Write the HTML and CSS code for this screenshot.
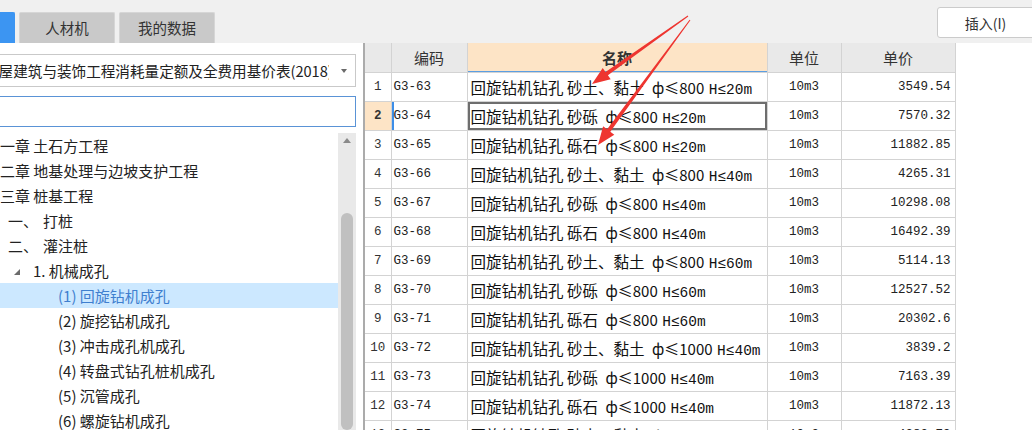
FILE: index.html
```html
<!DOCTYPE html>
<html lang="zh-CN">
<head>
<meta charset="utf-8">
<title>定额</title>
<link rel="stylesheet" href="styles.css">
</head>
<body>
<div class="app">
  <div class="topbar">
    <div class="tabs">
      <div class="tab tab-active">定额</div>
      <div class="tab">人材机</div>
      <div class="tab">我的数据</div>
    </div>
    <button class="btn-insert">插入(I)</button>
  </div>
  <div class="main">
    <aside class="left">
      <div class="select">
        <span class="select-text">房屋建筑与装饰工程消耗量定额及全费用基价表(2018)</span>
        <span class="caret"></span>
      </div>
      <div class="search"></div>
      <div class="tree-wrap">
        <ul class="tree">
          <li class="l0">第一章 土石方工程</li>
          <li class="l0">第二章 地基处理与边坡支护工程</li>
          <li class="l0">第三章 桩基工程</li>
          <li class="l1"><span class="num">一、</span>打桩</li>
          <li class="l1"><span class="num">二、</span>灌注桩</li>
          <li class="l2"><span class="tri"></span>1. 机械成孔</li>
          <li class="l3 sel">(1) 回旋钻机成孔</li>
          <li class="l3">(2) 旋挖钻机成孔</li>
          <li class="l3">(3) 冲击成孔机成孔</li>
          <li class="l3">(4) 转盘式钻孔桩机成孔</li>
          <li class="l3">(5) 沉管成孔</li>
          <li class="l3">(6) 螺旋钻机成孔</li>
        </ul>
        <div class="vscroll">
          <div class="vs-up"></div>
          <div class="vs-thumb"></div>
        </div>
      </div>
    </aside>
    <section class="grid">
      <table>
        <colgroup>
          <col class="c-no"><col class="c-code"><col class="c-name"><col class="c-unit"><col class="c-price">
        </colgroup>
        <thead>
          <tr>
            <th></th><th>编码</th><th class="th-name">名称</th><th>单位</th><th>单价</th>
          </tr>
        </thead>
        <tbody>
          <tr><td class="no">1</td><td class="code">G3-63</td><td class="name">回旋钻机钻孔 砂土、黏土 <span class="sp">ф≤800</span> <span class="hm">H≤20m</span></td><td class="unit">10m3</td><td class="price">3549.54</td></tr>
          <tr class="cur"><td class="no">2</td><td class="code">G3-64</td><td class="name">回旋钻机钻孔 砂砾 <span class="sp">ф≤800</span> <span class="hm">H≤20m</span></td><td class="unit">10m3</td><td class="price">7570.32</td></tr>
          <tr><td class="no">3</td><td class="code">G3-65</td><td class="name">回旋钻机钻孔 砾石 <span class="sp">ф≤800</span> <span class="hm">H≤20m</span></td><td class="unit">10m3</td><td class="price">11882.85</td></tr>
          <tr><td class="no">4</td><td class="code">G3-66</td><td class="name">回旋钻机钻孔 砂土、黏土 <span class="sp">ф≤800</span> <span class="hm">H≤40m</span></td><td class="unit">10m3</td><td class="price">4265.31</td></tr>
          <tr><td class="no">5</td><td class="code">G3-67</td><td class="name">回旋钻机钻孔 砂砾 <span class="sp">ф≤800</span> <span class="hm">H≤40m</span></td><td class="unit">10m3</td><td class="price">10298.08</td></tr>
          <tr><td class="no">6</td><td class="code">G3-68</td><td class="name">回旋钻机钻孔 砾石 <span class="sp">ф≤800</span> <span class="hm">H≤40m</span></td><td class="unit">10m3</td><td class="price">16492.39</td></tr>
          <tr><td class="no">7</td><td class="code">G3-69</td><td class="name">回旋钻机钻孔 砂土、黏土 <span class="sp">ф≤800</span> <span class="hm">H≤60m</span></td><td class="unit">10m3</td><td class="price">5114.13</td></tr>
          <tr><td class="no">8</td><td class="code">G3-70</td><td class="name">回旋钻机钻孔 砂砾 <span class="sp">ф≤800</span> <span class="hm">H≤60m</span></td><td class="unit">10m3</td><td class="price">12527.52</td></tr>
          <tr><td class="no">9</td><td class="code">G3-71</td><td class="name">回旋钻机钻孔 砾石 <span class="sp">ф≤800</span> <span class="hm">H≤60m</span></td><td class="unit">10m3</td><td class="price">20302.6</td></tr>
          <tr><td class="no">10</td><td class="code">G3-72</td><td class="name">回旋钻机钻孔 砂土、黏土 <span class="sp">ф≤1000</span> <span class="hm">H≤40m</span></td><td class="unit">10m3</td><td class="price">3839.2</td></tr>
          <tr><td class="no">11</td><td class="code">G3-73</td><td class="name">回旋钻机钻孔 砂砾 <span class="sp">ф≤1000</span> <span class="hm">H≤40m</span></td><td class="unit">10m3</td><td class="price">7163.39</td></tr>
          <tr><td class="no">12</td><td class="code">G3-74</td><td class="name">回旋钻机钻孔 砾石 <span class="sp">ф≤1000</span> <span class="hm">H≤40m</span></td><td class="unit">10m3</td><td class="price">11872.13</td></tr>
          <tr><td class="no">13</td><td class="code">G3-75</td><td class="name">回旋钻机钻孔 砂土、黏土 <span class="sp">ф≤1000</span> <span class="hm">H≤60m</span></td><td class="unit">10m3</td><td class="price">4282.79</td></tr>
        </tbody>
      </table>
    </section>
  </div>
  <svg class="arrows" width="1032" height="430" viewBox="0 0 1032 430">
    <polygon fill="#ee3530" points="688.3,16.4 607.9,75.2 610.7,79.3 592,84 602.7,67.9 605.5,72.0 687.7,15.6"/>
    <polygon fill="#ee3530" points="690.4,20.3 610.3,131.7 614.3,134.7 598,145 603.1,126.3 607.1,129.3 689.6,19.7"/>
  </svg>
</div>
</body>
</html>
```
FILE: styles.css
```css
html, body {
  margin: 0;
  padding: 0;
  background: #ffffff;
  overflow: hidden;
}
body {
  font-family: "Noto Sans CJK SC", "Noto Sans", sans-serif;
  color: #222;
  width: 1032px;
  height: 430px;
}
.app {
  position: relative;
  width: 1032px;
  height: 430px;
  overflow: hidden;
}
.topbar {
  height: 43px;
  background: #f0f0f0;
  display: flex;
}
.tabs {
  display: flex;
  gap: 4px;
  align-self: flex-end;
  margin-left: -81px;
}
.tab {
  width: 96px;
  height: 31px;
  box-sizing: border-box;
  background: #c9c9c9;
  border: 1px solid #d6d6d6;
  border-bottom: none;
  border-radius: 2px 2px 0 0;
  font-size: 14.5px;
  line-height: 30px;
  text-align: center;
  color: #333;
}
.tab-active {
  background: #3c95f2;
  border-color: #3c95f2;
  color: #fff;
}
.btn-insert {
  margin-left: auto;
  margin-right: -5px;
  align-self: flex-start;
  margin-top: 7px;
  width: 100px;
  height: 31px;
  background: #fff;
  border: 1px solid #cbcbcb;
  border-radius: 3px;
  font-family: "Noto Sans CJK SC", sans-serif;
  font-size: 14px;
  color: #333;
  padding: 0 3px 0 0;
}
.main {
  display: flex;
  height: 387px;
}
.left {
  width: 356px;
  flex: 0 0 356px;
  overflow: hidden;
  display: flex;
  flex-direction: column;
}
.select {
  margin-top: 11px;
  margin-left: -20px;
  height: 33px;
  box-sizing: border-box;
  border: 1px solid #c9c9c9;
  display: flex;
  align-items: center;
  padding-left: 3px;
}
.select-text {
  flex: 1;
  overflow: hidden;
  white-space: nowrap;
  font-size: 14.6px;
  color: #222;
  line-height: 31px;
}
.caret {
  width: 0;
  height: 0;
  border-left: 3.5px solid transparent;
  border-right: 3.5px solid transparent;
  border-top: 4px solid #6a6a6a;
  margin: 0 8px 0 12px;
}
.search {
  margin-top: 9px;
  margin-left: -20px;
  height: 31px;
  box-sizing: border-box;
  border: 1px solid #5a93d6;
}
.tree-wrap {
  margin-top: 6px;
  flex: 1;
  display: flex;
  min-height: 0;
}
.tree {
  list-style: none;
  margin: 0 0 0 -15px;
  padding: 0;
  width: 353px;
  flex: 0 0 353px;
}
.tree li {
  height: 25px;
  line-height: 25px;
  font-size: 15px;
  white-space: nowrap;
  color: #222;
  display: flex;
  align-items: center;
}
.tree .l0 { padding-left: 0; }
.tree .l1 { padding-left: 23px; }
.tree .l2 { padding-left: 29px; }
.tree .l3 { padding-left: 73px; }
.tree .num {
  display: inline-block;
  width: 35px;
}
.tree .tri {
  width: 0;
  height: 0;
  border-left: 6px solid transparent;
  border-bottom: 6px solid #6b6b6b;
  margin-right: 13px;
  margin-top: 2px;
}
.tree .sel {
  background: #cce8ff;
  color: #3f7fcf;
}
.vscroll {
  width: 18px;
  flex: 0 0 18px;
  background: #e9e9e9;
  position: relative;
  display: flex;
  flex-direction: column;
  align-items: center;
}
.vs-up {
  margin-top: 5px;
  width: 0;
  height: 0;
  border-left: 4px solid transparent;
  border-right: 4px solid transparent;
  border-bottom: 5px solid #8a8a8a;
}
.vs-thumb {
  margin-top: 70px;
  width: 12px;
  height: 260px;
  border-radius: 6px;
  background: #c0c0c0;
}
.grid {
  margin-left: 7px;
  border-left: 2px solid #ababab;
  height: 387px;
  overflow: hidden;
  align-self: flex-start;
}
table {
  border-collapse: collapse;
  table-layout: fixed;
  width: 590px;
}
col.c-no { width: 26px; }
col.c-code { width: 76px; }
col.c-name { width: 300px; }
col.c-unit { width: 74px; }
col.c-price { width: 114px; }
th, td {
  border: 1px solid #d3d3d3;
  padding: 0;
  white-space: nowrap;
  overflow: hidden;
}
th {
  height: 29px;
  background: #e9e9e9;
  font-weight: normal;
  font-size: 15px;
  color: #333;
  border-top: none;
  border-left: none;
}
.th-name {
  background: #fde4c6;
  font-weight: bold;
  box-shadow: inset 0 -1px 0 #5b9ee2;
}
td {
  height: 28px;
}
td.no {
  font-family: "Liberation Mono", monospace;
  font-size: 12.5px;
  text-align: center;
  color: #333;
  border-left: none;
}
td.code {
  font-family: "Liberation Mono", monospace;
  font-size: 12.5px;
  padding-left: 2px;
  color: #222;
}
td.name {
  font-size: 15.5px;
  padding-left: 3px;
  color: #111;
}
td.name .sp {
  margin-left: 4px;
  font-size: 15px;
}
td.name .hm {
  font-family: "Liberation Mono", monospace;
  font-size: 14.5px;
  margin-left: 1px;
}
td.unit {
  font-family: "Liberation Mono", monospace;
  font-size: 12.5px;
  text-align: center;
  color: #222;
}
td.price {
  font-family: "Liberation Mono", monospace;
  font-size: 12.5px;
  text-align: right;
  padding-right: 4px;
  color: #222;
}
tr.cur td.no {
  background: #fde4c6;
  font-weight: bold;
}
tr.cur td.code {
  box-shadow: inset 2px 0 0 #3d8ee8;
}
tr.cur td.name {
  box-shadow: inset 0 0 0 2px #6e6e6e;
}
.arrows {
  position: absolute;
  left: 0;
  top: 0;
  pointer-events: none;
}
```
